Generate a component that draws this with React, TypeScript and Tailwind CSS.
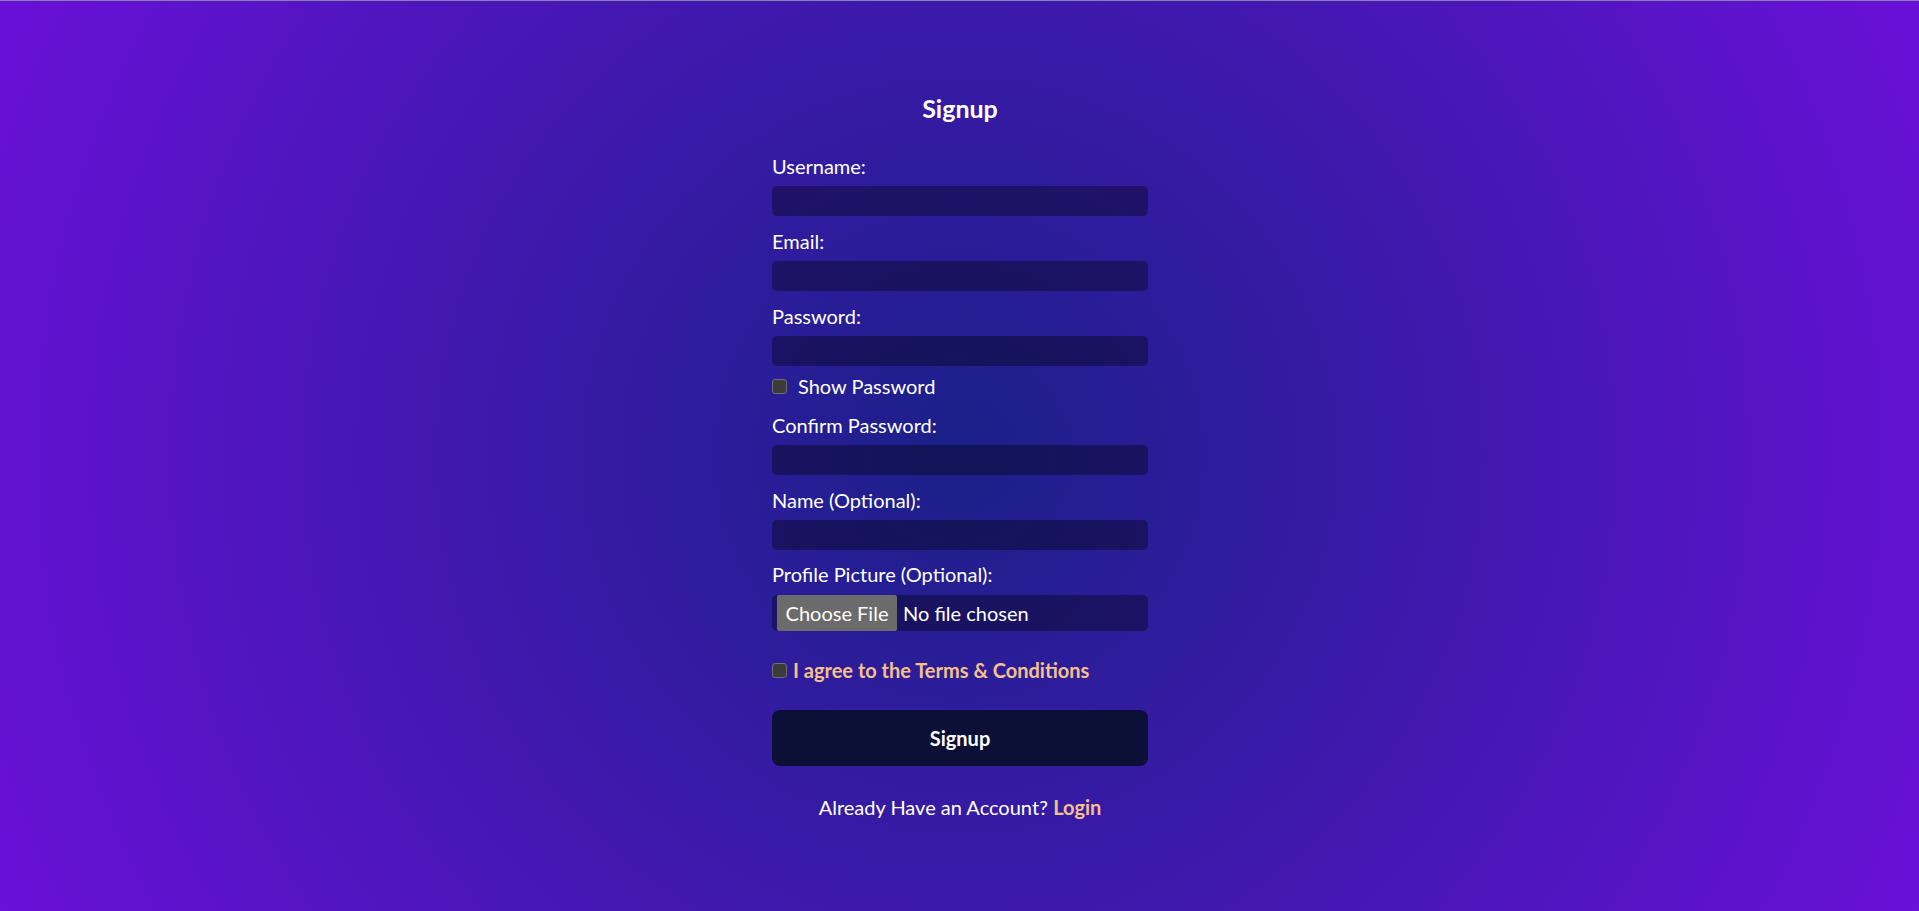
import React, { useState } from 'react';

const Field = ({ label, type = 'text', className = '' }: { label: string; type?: string; className?: string }) => (
  <div className={className}>
    <label className="block leading-[20px]">{label}</label>
    <input
      type={type}
      className="mt-[10px] block h-[30px] w-full rounded-[5px] bg-[rgba(0,0,0,0.35)] px-2 text-white outline-none"
    />
  </div>
);

export default function App() {
  const [showPassword, setShowPassword] = useState(false);
  const [agree, setAgree] = useState(false);

  return (
    <div className="min-h-screen border-t border-[#8a7fb4] bg-[radial-gradient(circle,#1a2088_0%,#6a10d8_100%)] font-['Lato','Noto_Sans',sans-serif] text-[20px] text-white">
      <div className="mx-auto w-[377px] pt-[91px] pl-px">
        <h2 className="text-center text-[25px] font-bold leading-[32px]">Signup</h2>

        {/* Main fields */}
        <Field label="Username:" className="mt-[32px]" />
        <Field label="Email:" className="mt-[15px]" />
        <Field label="Password:" type={showPassword ? 'text' : 'password'} className="mt-[15px]" />

        <label className="mt-[8px] flex items-center leading-[24px]">
          <input
            type="checkbox"
            checked={showPassword}
            onChange={() => setShowPassword(!showPassword)}
            className="h-[15px] w-[15px] appearance-none rounded-[3px] border border-[#6e6e6e] bg-[#3b3b3b]"
          />
          <span className="ml-[11px]">Show Password</span>
        </label>

        <Field label="Confirm Password:" type="password" className="mt-[17px]" />
        <Field label="Name (Optional):" className="mt-[15px]" />

        {/* Profile picture */}
        <div className="mt-[14px]">
          <label className="block leading-[20px]">Profile Picture (Optional):</label>
          <label className="mt-[11px] flex h-[36px] w-full cursor-pointer items-center rounded-[5px] bg-[rgba(0,0,0,0.35)] pl-[5px]">
            <input type="file" className="hidden" />
            <span className="flex h-full w-[120px] items-center justify-center rounded-[2px] bg-[#6b6b6b]">Choose File</span>
            <span className="ml-[6px]">No file chosen</span>
          </label>
        </div>

        {/* Terms */}
        <label className="mt-[27px] flex items-center leading-[24px]">
          <input
            type="checkbox"
            checked={agree}
            onChange={() => setAgree(!agree)}
            className="h-[15px] w-[15px] appearance-none rounded-[3px] border border-[#6e6e6e] bg-[#3b3b3b]"
          />
          <span className="ml-[6px] font-bold text-[#f6c08a]">I agree to the Terms &amp; Conditions</span>
        </label>

        <button className="mt-[28px] flex h-[56px] w-full items-center justify-center rounded-[8px] bg-[#0c1036] font-bold">
          Signup
        </button>

        <p className="mt-[29px] text-center leading-[24px]">
          Already Have an Account? <a className="font-bold text-[#f6c08a]">Login</a>
        </p>
      </div>
    </div>
  );
}
